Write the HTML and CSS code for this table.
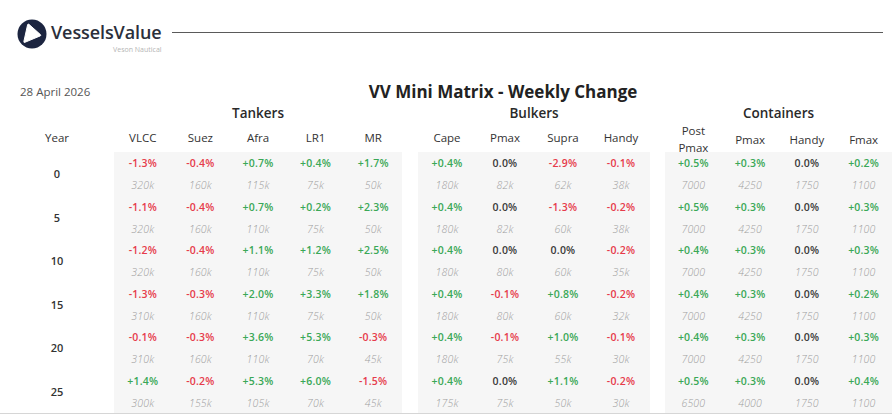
FILE: index.html
```html
<!DOCTYPE html>
<html lang="en">
<head>
<meta charset="utf-8">
<title>VV Mini Matrix - Weekly Change</title>
<link rel="stylesheet" href="styles.css">
</head>
<body>
<header class="top">
  <div class="brand">
    <svg class="logo" viewBox="0 0 30 30" width="30" height="30" aria-hidden="true">
      <circle cx="15" cy="15" r="14.5" fill="#1c2540"/>
      <path d="M10.6 5.8 L6.9 22.4 Q6.6 23.8 7.9 23.3 L23.2 16.9 Q24.4 16.3 23.4 15.6 L11.9 5.3 Q10.9 4.6 10.6 5.8 Z" fill="#fff" stroke="#fff" stroke-width="1" stroke-linejoin="round"/>
    </svg>
    <div class="brand-text">
      <div class="brand-name">VesselsValue</div>
      <div class="brand-sub">Veson Nautical</div>
    </div>
  </div>
  <div class="rule"></div>
</header>

<div class="title-row">
  <div class="date">28 April 2026</div>
  <h1 class="title">VV Mini Matrix - Weekly Change</h1>
</div>

<div class="matrix">
  <div class="years">
    <div class="group-title"></div>
    <div class="heads"><span>Year</span></div>
    <div class="ybody">
      <div class="y">0</div><div class="y">5</div><div class="y">10</div>
      <div class="y">15</div><div class="y">20</div><div class="y">25</div>
    </div>
  </div>

  <section class="panel tankers">
    <div class="group-title">Tankers</div>
    <div class="heads c5"><span>VLCC</span><span>Suez</span><span>Afra</span><span>LR1</span><span>MR</span></div>
    <div class="pbody">
      <div class="r p c5"><span class="dn">-1.3%</span><span class="dn">-0.4%</span><span class="up">+0.7%</span><span class="up">+0.4%</span><span class="up">+1.7%</span></div>
      <div class="r v c5"><span>320k</span><span>160k</span><span>115k</span><span>75k</span><span>50k</span></div>
      <div class="r p c5"><span class="dn">-1.1%</span><span class="dn">-0.4%</span><span class="up">+0.7%</span><span class="up">+0.2%</span><span class="up">+2.3%</span></div>
      <div class="r v c5"><span>320k</span><span>160k</span><span>110k</span><span>75k</span><span>50k</span></div>
      <div class="r p c5"><span class="dn">-1.2%</span><span class="dn">-0.4%</span><span class="up">+1.1%</span><span class="up">+1.2%</span><span class="up">+2.5%</span></div>
      <div class="r v c5"><span>320k</span><span>160k</span><span>110k</span><span>75k</span><span>50k</span></div>
      <div class="r p c5"><span class="dn">-1.3%</span><span class="dn">-0.3%</span><span class="up">+2.0%</span><span class="up">+3.3%</span><span class="up">+1.8%</span></div>
      <div class="r v c5"><span>310k</span><span>160k</span><span>110k</span><span>75k</span><span>50k</span></div>
      <div class="r p c5"><span class="dn">-0.1%</span><span class="dn">-0.3%</span><span class="up">+3.6%</span><span class="up">+5.3%</span><span class="dn">-0.3%</span></div>
      <div class="r v c5"><span>310k</span><span>160k</span><span>110k</span><span>70k</span><span>45k</span></div>
      <div class="r p c5"><span class="up">+1.4%</span><span class="dn">-0.2%</span><span class="up">+5.3%</span><span class="up">+6.0%</span><span class="dn">-1.5%</span></div>
      <div class="r v c5"><span>300k</span><span>155k</span><span>105k</span><span>70k</span><span>45k</span></div>
    </div>
  </section>

  <section class="panel bulkers">
    <div class="group-title">Bulkers</div>
    <div class="heads c4"><span>Cape</span><span>Pmax</span><span>Supra</span><span>Handy</span></div>
    <div class="pbody">
      <div class="r p c4"><span class="up">+0.4%</span><span class="nt">0.0%</span><span class="dn">-2.9%</span><span class="dn">-0.1%</span></div>
      <div class="r v c4"><span>180k</span><span>82k</span><span>62k</span><span>38k</span></div>
      <div class="r p c4"><span class="up">+0.4%</span><span class="nt">0.0%</span><span class="dn">-1.3%</span><span class="dn">-0.2%</span></div>
      <div class="r v c4"><span>180k</span><span>82k</span><span>60k</span><span>38k</span></div>
      <div class="r p c4"><span class="up">+0.4%</span><span class="nt">0.0%</span><span class="nt">0.0%</span><span class="dn">-0.2%</span></div>
      <div class="r v c4"><span>180k</span><span>80k</span><span>60k</span><span>35k</span></div>
      <div class="r p c4"><span class="up">+0.4%</span><span class="dn">-0.1%</span><span class="up">+0.8%</span><span class="dn">-0.2%</span></div>
      <div class="r v c4"><span>180k</span><span>80k</span><span>60k</span><span>32k</span></div>
      <div class="r p c4"><span class="up">+0.4%</span><span class="dn">-0.1%</span><span class="up">+1.0%</span><span class="dn">-0.1%</span></div>
      <div class="r v c4"><span>180k</span><span>75k</span><span>55k</span><span>30k</span></div>
      <div class="r p c4"><span class="up">+0.4%</span><span class="nt">0.0%</span><span class="up">+1.1%</span><span class="dn">-0.2%</span></div>
      <div class="r v c4"><span>175k</span><span>75k</span><span>50k</span><span>30k</span></div>
    </div>
  </section>

  <section class="panel containers">
    <div class="group-title">Containers</div>
    <div class="heads c4"><span>Post<br>Pmax</span><span>Pmax</span><span>Handy</span><span>Fmax</span></div>
    <div class="pbody">
      <div class="r p c4"><span class="up">+0.5%</span><span class="up">+0.3%</span><span class="nt">0.0%</span><span class="up">+0.2%</span></div>
      <div class="r v c4"><span>7000</span><span>4250</span><span>1750</span><span>1100</span></div>
      <div class="r p c4"><span class="up">+0.5%</span><span class="up">+0.3%</span><span class="nt">0.0%</span><span class="up">+0.3%</span></div>
      <div class="r v c4"><span>7000</span><span>4250</span><span>1750</span><span>1100</span></div>
      <div class="r p c4"><span class="up">+0.4%</span><span class="up">+0.3%</span><span class="nt">0.0%</span><span class="up">+0.3%</span></div>
      <div class="r v c4"><span>7000</span><span>4250</span><span>1750</span><span>1100</span></div>
      <div class="r p c4"><span class="up">+0.4%</span><span class="up">+0.3%</span><span class="nt">0.0%</span><span class="up">+0.2%</span></div>
      <div class="r v c4"><span>7000</span><span>4250</span><span>1750</span><span>1100</span></div>
      <div class="r p c4"><span class="up">+0.4%</span><span class="up">+0.3%</span><span class="nt">0.0%</span><span class="up">+0.3%</span></div>
      <div class="r v c4"><span>7000</span><span>4250</span><span>1750</span><span>1100</span></div>
      <div class="r p c4"><span class="up">+0.5%</span><span class="up">+0.3%</span><span class="nt">0.0%</span><span class="up">+0.4%</span></div>
      <div class="r v c4"><span>6500</span><span>4000</span><span>1750</span><span>1100</span></div>
    </div>
  </section>
</div>
</body>
</html>
```

FILE: styles.css
```css
html, body {
  margin: 0;
  padding: 0;
  background: #ffffff;
}
body {
  width: 892px;
  height: 414px;
  overflow: hidden;
  font-family: "Open Sans", "DejaVu Sans", sans-serif;
  color: #333;
}

/* header */
.top {
  display: flex;
  align-items: flex-start;
  padding: 19px 9px 0 17px;
  height: 30px;
}
.brand {
  display: flex;
  align-items: flex-start;
  gap: 4px;
}
.logo { display: block; }
.brand-text {
  display: flex;
  flex-direction: column;
  align-items: flex-end;
  margin-top: 1px;
}
.brand-name {
  font-size: 18px;
  font-weight: 600;
  color: #2b2f3b;
  line-height: 25px;
  letter-spacing: -0.1px;
}
.brand-sub {
  font-size: 7px;
  color: #b5b5b5;
  line-height: 9px;
}
.rule {
  flex: 1;
  height: 0;
  border-top: 1.5px solid #5a5a5a;
  margin-left: 10px;
  margin-top: 13px;
}

/* title row */
.title-row {
  display: flex;
  align-items: center;
  margin-top: 32px;
  height: 22px;
}
.date {
  width: 114px;
  box-sizing: border-box;
  padding-left: 20px;
  font-size: 11.5px;
  color: #555;
  margin-top: -2px;
}
.title {
  flex: 1;
  margin: 0;
  text-align: center;
  font-size: 17px;
  font-weight: 700;
  color: #222;
  line-height: 22px;
}

/* matrix */
.matrix {
  display: flex;
  margin-top: 1px;
  border-bottom: 1px solid #d6d6d6;
}
.years { width: 114px; }
.tankers { width: 288px; }
.bulkers { width: 232px; margin-left: 16px; }
.containers { width: 227px; margin-left: 15px; }

.group-title {
  height: 18px;
  line-height: 18px;
  text-align: center;
  font-size: 13.5px;
  font-weight: 600;
  color: #2a2a2a;
}
.heads {
  height: 30px;
  display: grid;
  align-items: center;
  text-align: center;
  font-size: 11.5px;
  font-weight: 500;
  color: #333;
  line-height: 17px;
}
.c5 { display: grid; grid-template-columns: repeat(5, 1fr); }
.c4 { display: grid; grid-template-columns: repeat(4, 1fr); }

.pbody {
  background: #f6f6f6;
  height: 261px;
}
.ybody {
  height: 261px;
  display: flex;
  flex-direction: column;
}
.y {
  height: 43.5px;
  display: flex;
  align-items: center;
  justify-content: center;
  font-size: 11px;
  font-weight: 600;
  color: #333;
}
.r { text-align: center; }
.p {
  height: 22px;
  line-height: 22px;
  font-size: 10.5px;
  font-weight: 600;
  letter-spacing: 0.2px;
}
.v {
  height: 19.5px;
  padding-top: 2px;
  line-height: 19.5px;
  font-size: 10.5px;
  font-style: italic;
  font-weight: 300;
  color: #9e9e9e;
  letter-spacing: 0.2px;
}
.up { color: #3aa857; }
.dn { color: #e63b4b; }
.nt { color: #3a3a3a; }
```
